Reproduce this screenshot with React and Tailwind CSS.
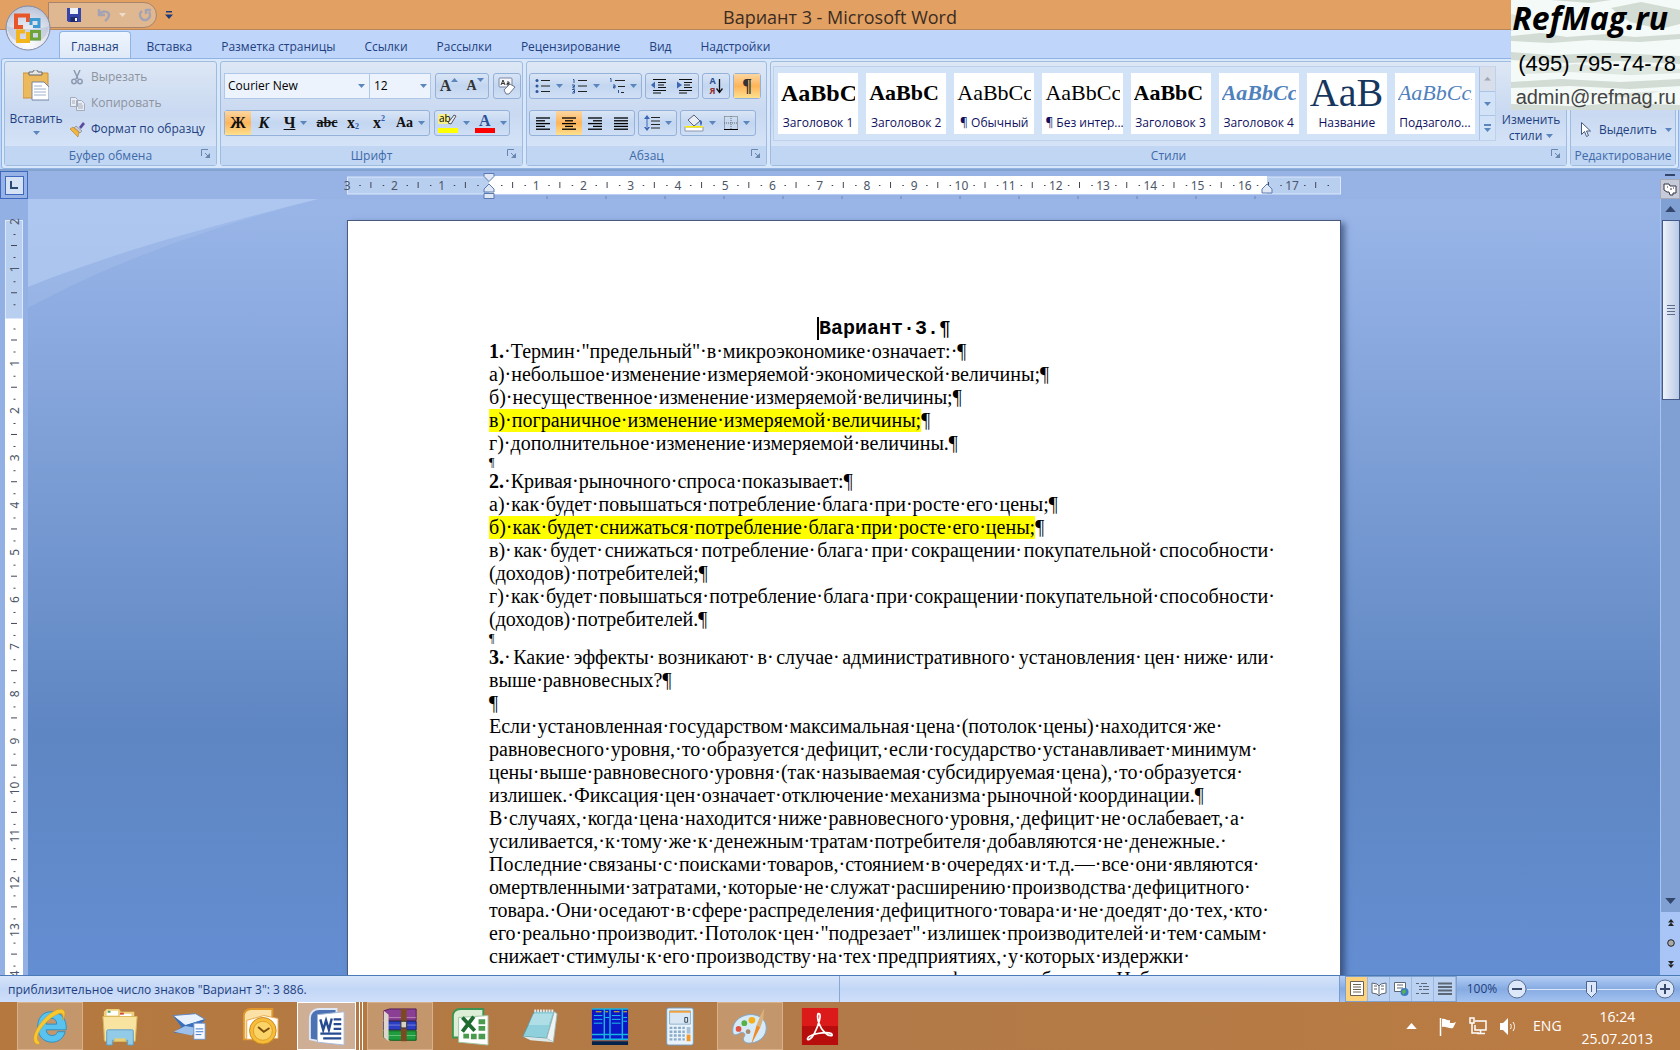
import React, { useState } from 'react';

const CM = 47.24;

const tabs = ['Главная', 'Вставка', 'Разметка страницы', 'Ссылки', 'Рассылки', 'Рецензирование', 'Вид', 'Надстройки'];

const styles = [
  { name: 'Заголовок 1', sample: 'AaBbCc', look: 'text-2xl/10 font-bold text-black' },
  { name: 'Заголовок 2', sample: 'AaBbC', look: 'text-[22px]/10 font-bold text-black' },
  { name: '¶ Обычный', sample: 'AaBbCc', look: 'text-[22px]/10 text-black' },
  { name: '¶ Без интер...', sample: 'AaBbCc', look: 'text-[22px]/10 text-black' },
  { name: 'Заголовок 3', sample: 'AaBbC', look: 'text-[22px]/10 font-bold text-black' },
  { name: 'Заголовок 4', sample: 'AaBbCc', look: 'text-[22px]/10 font-bold italic text-[#4f81bd]' },
  { name: 'Название', sample: 'AaB', look: 'text-[40px]/10 text-[#17365d]' },
  { name: 'Подзаголо...', sample: 'AaBbCcD', look: 'text-[22px]/10 italic text-[#4f81bd]' },
];

const lines = [
  { num: '1.', text: 'Термин "предельный" в микроэкономике означает: ¶' },
  { text: 'а) небольшое изменение измеряемой экономической величины;¶' },
  { text: 'б) несущественное изменение измеряемой величины;¶' },
  { mark: true, text: 'в) пограничное изменение измеряемой величины;' },
  { text: 'г) дополнительное изменение измеряемой величины.¶' },
  { small: true, text: '¶' },
  { num: '2.', text: 'Кривая рыночного спроса показывает:¶' },
  { text: 'а) как будет повышаться потребление блага при росте его цены;¶' },
  { mark: true, text: 'б) как будет снижаться потребление блага при росте его цены;' },
  { full: true, text: 'в) как будет снижаться потребление блага при сокращении покупательной способности' },
  { text: '(доходов) потребителей;¶' },
  { full: true, text: 'г) как будет повышаться потребление блага при сокращении покупательной способности' },
  { text: '(доходов) потребителей.¶' },
  { small: true, text: '¶' },
  { full: true, num: '3.', text: 'Какие эффекты возникают в случае административного установления цен ниже или' },
  { text: 'выше равновесных?¶' },
  { text: '¶' },
  { text: 'Если установленная государством максимальная цена (потолок цены) находится же ' },
  { text: 'равновесного уровня, то образуется дефицит, если государство устанавливает минимум ' },
  { text: 'цены выше равновесного уровня (так называемая субсидируемая цена), то образуется ' },
  { text: 'излишек. Фиксация цен означает отключение механизма рыночной координации.¶' },
  { text: 'В случаях, когда цена находится ниже равновесного уровня, дефицит не ослабевает, а ' },
  { text: 'усиливается, к тому же к денежным тратам потребителя добавляются не денежные. ' },
  { text: 'Последние связаны с поисками товаров, стоянием в очередях и т.д.— все они являются ' },
  { text: 'омертвленными затратами, которые не служат расширению производства дефицитного ' },
  { text: 'товара. Они оседают в сфере распределения дефицитного товара и не доедят до тех, кто ' },
  { text: 'его реально производит. Потолок цен "подрезает" излишек производителей и тем самым ' },
  { text: 'снижает стимулы к его производству на тех предприятиях, у которых издержки ' },
  { text: 'производства оказались выше уровня потолка цены, фирмы не больше. Наблюдается ' },
];

const dots = (s) => s.replace(/ /g, '·');

const Arrow = ({ big, className = 'text-[#5b86bd]' }) => (
  <svg width={big ? 11 : 7} height={big ? 6 : 4} viewBox="0 0 7 4" className={`shrink-0 ${className}`} aria-hidden="true">
    <path d="M0 0h7L3.5 4z" fill="currentColor" />
  </svg>
);

const Line = ({ line }) => {
  if (line.full) {
    const words = line.text.split(' ');
    return (
      <p className="-mr-2 flex h-[23px] justify-between whitespace-nowrap">
        {line.num && <span><b>{line.num}</b>·</span>}
        {words.map((w, i) => <span key={i}>{w}·</span>)}
      </p>
    );
  }
  if (line.small) return <p className="h-[15px] text-xs leading-[15px]">{line.text}</p>;
  if (line.mark) {
    return (
      <p className="h-[23px] whitespace-nowrap">
        <mark className="inline-block h-[23px] bg-[#ffff00] text-black">{dots(line.text)}</mark>¶
      </p>
    );
  }
  return (
    <p className="h-[23px] whitespace-nowrap">
      {line.num && <b>{line.num}</b>}
      {line.num && '·'}
      {dots(line.text)}
    </p>
  );
};

const Group = ({ title, launcher = true, className = '', children }) => (
  <section className={`flex flex-col rounded-[3px] border border-[#9dbcdf] bg-gradient-to-b from-[#dde7f5] via-[#c9d9f1] to-[#dbe9fa] ${className}`}>
    <div className="flex h-[84px] min-w-0">{children}</div>
    <div className="relative flex h-[19px] items-center justify-center bg-[#c1d6f2] pt-px text-[#3e6aaa]">
      <h2>{title}</h2>
      {launcher && (
        <button aria-label={`Параметры: ${title}`} className="absolute top-[3px] right-[5px]">
          <svg width="10" height="10" viewBox="0 0 10 10" fill="none" stroke="#6886ae">
            <path d="M.5 7V.5H7M4 4l4 4" />
            <path d="M9 4v5H4z" fill="#6886ae" stroke="none" />
          </svg>
        </button>
      )}
    </div>
  </section>
);

const Set = ({ children }) => (
  <div className="flex h-[26px] rounded-[3px] border border-[#94b1da] bg-gradient-to-b from-[#d9e5f6] via-[#c3d6f0] to-[#cfdff5]">{children}</div>
);

const Tool = ({ label, wide, active, arrow, children }) => (
  <button
    aria-label={label}
    className={`flex items-center justify-center leading-none ${wide ? 'w-[37px] gap-[5px]' : 'w-[26px]'} ${active ? 'bg-gradient-to-b from-[#fbd6a0] via-[#fdb458] to-[#fde08f]' : ''}`}
  >
    {children}
    {arrow && <Arrow />}
  </button>
);

const Rows = ({ rows }) => (
  <svg width="14" height="13" viewBox="0 0 14 13" stroke="#000" strokeWidth="1.3" aria-hidden="true">
    {rows.map(([a, b], i) => <path key={i} d={`M${a} ${i * 2.8 + 1}H${b}`} />)}
  </svg>
);

const Bullets = ({ kind }) => (
  <svg width="16" height="16" viewBox="0 0 16 16" stroke="#222" aria-hidden="true">
    {kind === 'tree' ? <path d="M6 2.5h10M9 8.5h7M12 14.5h3" /> : <path d="M6 2.5h9M6 8h9M6 13.5h9" />}
    {kind === 'dot' && <g fill="#2b579a" stroke="none"><circle cx="2" cy="2.5" r="1.5" /><circle cx="2" cy="8" r="1.5" /><circle cx="2" cy="13.5" r="1.5" /></g>}
    {kind === 'num' && <g stroke="#2b579a" fill="none"><path d="M1 1.5h1V5M0 7h2.5v1.5H1V10h2M0 11.5h2.5V15H0M1 13.5h1" /></g>}
    {kind === 'tree' && <g stroke="#2b579a" fill="none"><path d="M1 .5h1V4M4 7h2v3H4.5V8.5H6M9.5 12v3" /></g>}
  </svg>
);

const Indent = ({ out }) => (
  <svg width="16" height="16" viewBox="0 0 16 16" stroke="#111" fill="none" aria-hidden="true">
    <path d="M2 1.5h13M7 4.5h8M7 7h6M7 9.5h8M2 12.5h13M2 15h8" strokeWidth="1.2" />
    <path d={out ? 'M4 3.5L0 7l4 3.5z' : 'M0 3.5L5 7l-5 3.5z'} fill="#3a66b5" stroke="none" />
  </svg>
);

function HRuler() {
  const items = [];
  for (let i = -3; i <= 17; i++) {
    const x = 142 + i * CM;
    if (i !== 0) items.push(<text key={i} x={x} y="14" textAnchor="middle">{Math.abs(i)}</text>);
    items.push(<path key={`d${i}`} d={`M${x + 12} 9.5h1.5M${x + CM * 0.75} 9.5h1.5`} stroke="#445" />);
    items.push(<path key={`h${i}`} d={`M${x + CM / 2} 6v6`} stroke="#445" />);
  }
  return (
    <svg width="994" height="28" viewBox="0 -5 994 28" className="mx-auto block overflow-visible font-['Noto_Sans',sans-serif] text-xs" fill="#4c5668">
      <rect x=".5" y="1" width="993" height="17" fill="#b9cff0" stroke="#dbe8fb" />
      <rect x="142" y="0" width="778" height="18" fill="#fff" />
      {items}
      <path d="M200 20v3M259 20v3M318 20v3M377 20v3M436 20v3M495 20v3M554 20v3M613 20v3M672 20v3M731 20v3M790 20v3M849 20v3M908 20v3" stroke="#6d84b0" />
      <g fill="#dfe8f4" stroke="#5a7ab0">
        <path d="M137 -2.5h10v3l-5 5-5-5zM142 8l5 5v3h-10v-3zM137 17.5h10v5h-10zM920 8l5 5v4h-10v-4z" />
      </g>
    </svg>
  );
}

function VRuler() {
  const items = [];
  for (let i = -2; i <= 16; i++) {
    const y = 98 + i * CM;
    if (i !== 0) items.push(<text key={i} transform={`translate(14 ${y - 2}) rotate(-90)`} textAnchor="middle">{Math.abs(i)}</text>);
    items.push(<path key={`d${i}`} d={`M8.5 ${y + 11}h2M8.5 ${y + 34}h2M6 ${y + 22}h6`} stroke="#445" />);
  }
  return (
    <svg width="18" height="900" className="block overflow-visible font-['Noto_Sans',sans-serif] text-xs" fill="#4c5668">
      <rect width="18" height="900" fill="#fff" />
      <rect x=".5" y=".5" width="17" height="98" fill="#b9cff0" stroke="#dbe8fb" />
      {items}
    </svg>
  );
}

const OfficeLogo = () => (
  <svg width="46" height="46" viewBox="0 0 46 46" aria-hidden="true">
    <defs>
      <radialGradient id="orb" cx=".5" cy=".85" r=".9"><stop offset="0" stopColor="#fff" /><stop offset=".55" stopColor="#dde1ec" /><stop offset="1" stopColor="#b4bfd4" /></radialGradient>
    </defs>
    <circle cx="23" cy="23" r="22" fill="url(#orb)" stroke="#7f8ba6" />
    <path d="M2 21c8 4 34 4 42 0A21 21 0 0 1 35 36H11A21 21 0 0 1 2 21z" fill="#aab6d2" opacity=".45" />
    <g fill="none" strokeWidth="4">
      <path d="M18 22h-7V10.5H23V17" stroke="#e8572a" />
      <path d="M26 20v-5.5h8v7h-6" stroke="#3e9ad2" strokeWidth="3" />
      <path d="M20 26.5h-7v9.5h10v-9" stroke="#f2b51d" />
      <path d="M26.5 26.5h8v7.5h-8z" stroke="#6ba53a" strokeWidth="3" />
    </g>
  </svg>
);

const taskApps = [
  {
    name: 'Internet Explorer', open: true, icon: (
      <>
        <path d="M21 5C12 5 7 12 7 21s6 16 15 16c7 0 12-4 14-11h-8c-1 3-3 4-6 4-4 0-6-3-6-6h21C38 12 31 5 21 5zm-5 13c1-5 3-6 6-6s5 2 5 6z" fill="#58c3ee" stroke="#2a8fc6" />
        <path d="M6 39C-4 34 12 9 27 3c9-3 11 4 6 11 2-7 0-9-6-6C16 13 2 31 8 36c2 2 1 4-2 3z" fill="#f8c82e" stroke="#d79a12" strokeWidth=".5" />
      </>
    ),
  },
  {
    name: 'Проводник', icon: (
      <>
        <path d="M3 5l3-3h13l2 3h14v30H3z" fill="#eed07a" />
        <path d="M6 4h12v5H6zM20 7h12v4H20z" fill="#fff" /><path d="M7 4h3v2H7z" fill="#4aa35a" /><path d="M20 6h4v2h-4z" fill="#d4483b" />
        <path d="M2 10h36l-2 26H4z" fill="#f9e3a0" stroke="#d9b75c" />
        <path d="M6 26c0-2 1-2 2-2h24c2 0 2 0 2 2v14h-6v-5H12v5H6z" fill="#92cbe8" stroke="#5c9fc8" /><path d="M14 33h12v3H14z" fill="#e9cf72" />
      </>
    ),
  },
  {
    name: 'Почта', icon: (
      <>
        <path d="M2 9l24-2 10 6-21 7z" fill="#e9f2fc" stroke="#5b87c4" /><path d="M2 9l13 10 21-6-14 16-19-2 8-6z" fill="#3a6fbc" />
        <path d="M3 26l12-6 13 2-6 8z" fill="#9dc0ea" /><path d="M24 17h12v17H24z" fill="#f6f9ff" stroke="#6a8fc5" /><path d="M26 23h8M26 26h8M26 29h6" stroke="#3a78c9" />
      </>
    ),
  },
  {
    name: 'Outlook', icon: (
      <>
        <path d="M3 34V10c0-5 3-8 8-8h22v32z" fill="#fbe1a5" stroke="#e0972b" strokeWidth="2" />
        <path d="M6 14l18-5 15 3v21l-33 1z" fill="#fff" stroke="#e6a649" />
        <circle cx="23" cy="25" r="14" fill="#f6bc3a" stroke="#c9871a" /><circle cx="23" cy="25" r="10" fill="#fbd469" stroke="#e09c22" /><path d="M18 21l6 5 6-4" fill="none" stroke="#7b4d0b" strokeWidth="2" />
      </>
    ),
  },
  {
    name: 'Word', current: true, icon: (
      <>
        <path d="M2 34V12C2 6 6 2 12 2h18v6L12 36z" fill="#4d72b4" stroke="#dfe8f6" strokeWidth="2" />
        <path d="M10 8l28-3v35l-28-3z" fill="#fff" stroke="#a6b9d9" />
        <path d="M13 13l3 11 3-10 3 10 3-12" fill="none" stroke="#274b91" strokeWidth="2.5" /><path d="M27 13h8M27 18h8M27 23h8M13 28h22M16 33h19" stroke="#274b91" strokeWidth="2.5" />
      </>
    ),
  },
  {
    name: 'WinRAR', open: true, icon: (
      <>
        <path d="M3 4l6-2h28v12H3z" fill="#8a3f94" stroke="#4f1d58" /><path d="M3 15h34v9H3z" fill="#2c3fc4" stroke="#131d70" /><path d="M3 25h34v10H10l-7-3z" fill="#1f9c3d" stroke="#0b5a1d" />
        <path d="M3 4l5 4v28l-5-4z" fill="#ded6cd" /><path d="M8 11h29M8 19h29M8 30h29" stroke="#fff" opacity=".35" />
        <path d="M21 2h6v34h-6z" fill="#7c4a22" /><path d="M21 15h6v7h-6z" fill="#d9d2c2" stroke="#333" />
      </>
    ),
  },
  {
    name: 'Excel', icon: (
      <>
        <path d="M2 32V10c0-5 3-8 8-8h24v30z" fill="#dcefd6" stroke="#3e9450" strokeWidth="2" /><path d="M8 11l31-2v31l-31-3z" fill="#fff" stroke="#9dc5a2" />
        <path d="M29 13h7v5h-7zM29 20h7v5h-7zM29 28h7v6h-7zM21 28h6v6h-6zM13 28h6v5h-6z" fill="#4a9b4e" /><path d="M12 11l13 14M24 10L12 26" stroke="#1f6b30" strokeWidth="4" />
      </>
    ),
  },
  {
    name: 'Блокнот', icon: (
      <>
        <path d="M14 5h21l-8 28-25-2z" fill="#8fd0dc" stroke="#5a9aa8" /><path d="M35 5l3 2-4 30-7-4z" fill="#eef4f4" stroke="#9fb6b8" /><path d="M2 31l25 2 7 4-24-2z" fill="#dce8e8" />
        <path d="M14 4h21" stroke="#e8e8e8" strokeWidth="3" strokeDasharray="2 1" /><path d="M13 7h20l-4 12H8z" fill="#c4e8ee" opacity=".6" />
      </>
    ),
  },
  {
    name: 'База данных', icon: (
      <>
        <path d="M1 2h38v33H1z" fill="#0a16c8" /><path d="M1 2h38M1 34h38M14 2v32M20 2v32M33 2v32M1 29h38" stroke="#17b6dc" strokeWidth="1.5" />
        <path d="M3 9h9M3 13h9M3 17h9M22 9h9M22 13h9M22 17h9M15 11h4M34 11h4M34 15h4" stroke="#21c8e8" /><path d="M5 5h6M24 5h6M15 5h3M34 5h4" stroke="#f4d000" /><path d="M1 36h38v4H1z" fill="#05224a" />
      </>
    ),
  },
  {
    name: 'Калькулятор', icon: (
      <>
        <rect x="6" y="1" width="28" height="39" rx="2" fill="#eaf3fa" stroke="#6f9bc0" /><path d="M9 4h22v14H9z" fill="#d8e7f3" stroke="#8eb1cd" /><path d="M9 5h22" stroke="#f0a23c" strokeWidth="2" /><path d="M25 11h3v5h-3z" fill="none" stroke="#345" />
        <path d="M9 22h16M9 26h16M9 30h16M9 34h16" stroke="#8aaccb" strokeWidth="2.5" strokeDasharray="3 1.5" /><path d="M27 21h4v7h-4z" fill="#a8c3d9" /><path d="M27 29h4v7h-4z" fill="#f0992d" />
      </>
    ),
  },
  {
    name: 'Paint', open: true, icon: (
      <>
        <path d="M2 27C0 15 12 7 23 8c10 1 15 8 14 16-1 9-10 14-18 14-6 0-7-5-5-7 2-3-1-5-4-4-3 2-7 4-8 0z" fill="#d6eaf8" stroke="#7ba7cc" />
        <circle cx="8" cy="23" r="3" fill="#e25342" /><circle cx="14" cy="17" r="3" fill="#56b147" /><circle cx="22" cy="14" r="3.5" fill="#f5af1b" /><circle cx="18" cy="26" r="2.5" fill="#a88c70" />
        <path d="M21 40l6-21 4 2z" fill="#ee8a28" /><path d="M27 19l4-10 4-8-1 11-3 9z" fill="#d8b27a" />
      </>
    ),
  },
  {
    name: 'Adobe Reader', icon: (
      <>
        <path d="M1 1h38v39H1z" fill="#b80d0d" /><path d="M1 1h38v19H1z" fill="#dc1a1a" />
        <path d="M18 7c5-1 0 13-4 21-3 6-8 8-7 5 1-4 19-8 25-5 3 3-3 3-7-1-5-5-9-15-7-20z" fill="none" stroke="#fff" strokeWidth="1.8" />
      </>
    ),
  },
];

const views = [
  { name: 'Разметка страницы', icon: <><path d="M1.5.5h13v14h-13z" fill="#fff" stroke="#6b6250" /><path d="M4 3.5h8M4 6h8M4 8.5h8M4 11h8" stroke="#6b6250" /></> },
  { name: 'Режим чтения', icon: <path d="M1 2l5 1 2 2 2-2 5-1v10l-5 1-2 2-2-2-5-1zM8 5v9M3 5h3M3 8h3M10 5h3M10 8h3" fill="#fff" stroke="#5d6674" /> },
  { name: 'Веб-документ', icon: <><path d="M1.5 1.5h11v9h-11z" fill="#fff" stroke="#5d6674" /><path d="M4 4h6M4 7h6" stroke="#5d6674" /><circle cx="11.5" cy="11" r="4" fill="#3b7dc4" /><path d="M9 10l3-2 1 3-3 3z" fill="#5fb04a" /></> },
  { name: 'Структура', icon: <path d="M1 2.5h3M6 2.5h6M4 5.5h3M8 5.5h6M4 8.5h3M8 8.5h6M1 12.5h3M6 12.5h8" stroke="#5d6674" /> },
  { name: 'Черновик', icon: <path d="M1 2.5h14M1 6h14M1 9.5h14M1 13h14" stroke="#5d6674" strokeWidth="1.8" /> },
];

export default function App() {
  const [tab, setTab] = useState('Главная');
  const [font, setFont] = useState('Courier New');
  const [size, setSize] = useState('12');
  const [zoom, setZoom] = useState(100);

  return (
    <div className="relative flex h-screen flex-col overflow-hidden bg-[#bfd5fa] font-['Open_Sans','Noto_Sans',sans-serif] text-xs text-[#1e3f80]">
      <header className="relative">
        <div className="flex h-[30px] items-center justify-center border-b border-[#b9865a] bg-[#e2a062]">
          <h1 className="pt-1 text-lg text-[#3a2c22]">Вариант 3 - Microsoft Word</h1>
        </div>

        {/* quick access toolbar and the office button overlap the title bar */}
        <div className="absolute top-[2px] left-12 flex h-[26px] w-[109px] items-center gap-3 rounded-r-full border border-[#a9836a] bg-[#dfb791] pl-[18px]">
          <button aria-label="Сохранить">
            <svg width="14" height="14" viewBox="0 0 14 14"><path d="M0 0h14v14H1.5L0 12.5z" fill="#3545a8" /><path d="M3 0h8v6H3z" fill="#eef2fb" /><path d="M3.5 9h7v5h-7z" fill="#1e2970" /><path d="M8 10h2v3H8z" fill="#fff" /></svg>
          </button>
          <button aria-label="Отменить" className="ml-1 flex items-center gap-2">
            <svg width="14" height="14" viewBox="0 0 14 14" fill="none" stroke="#a3a3b4" strokeWidth="2.5"><path d="M2 1v6h6M2 7c3-5 10-4 10 0 0 3-2 4-4 6" /></svg>
            <Arrow className="text-[#f0dccb]" />
          </button>
          <button aria-label="Повторить">
            <svg width="14" height="14" viewBox="0 0 14 14" fill="none" stroke="#a3a3b4" strokeWidth="2.5"><path d="M4 3a5 5 0 1 0 7 1M8 6V1M8 2h5" /></svg>
          </button>
        </div>
        <button aria-label="Настройка панели быстрого доступа" className="absolute top-[11px] left-[165px]">
          <svg width="8" height="8" viewBox="0 0 8 8" fill="#1f3a78"><path d="M1 0h6v1.5H1zM0 3.5h8L4 8z" /></svg>
        </button>
        <button aria-label="Кнопка Office" className="absolute top-[5px] left-[5px] z-10"><OfficeLogo /></button>

        <nav className="flex h-7 items-end pl-[59px]">
          {tabs.map((t) => (
            <button
              key={t}
              onClick={() => setTab(t)}
              className={`h-[27px] rounded-t-[4px] pt-1 ${t === tab ? 'mr-1 border border-b-0 border-[#8fb4e3] bg-gradient-to-b from-[#eef5fd] to-[#dfe9f7] px-[11px]' : 'mr-[5px] px-3'}`}
            >
              {t}
            </button>
          ))}
        </nav>

        <div className="mx-px flex gap-[3px] rounded-[3px] border border-[#8fb4e3] bg-[#d8e7fa] p-[2px]">
          <Group title="Буфер обмена" className="w-[213px]">
            <button className="flex w-[62px] shrink-0 flex-col items-center pt-2">
              <svg width="26" height="31" viewBox="0 0 26 31" aria-hidden="true">
                <path d="M0 3h25v25H0z" fill="#ecb95c" stroke="#c8923a" /><path d="M6 5V2h4c0-3 5-3 5 0h4v3z" fill="#e6e6e6" stroke="#666" />
                <path d="M9 12h12l5 5v13H9z" fill="#fff" stroke="#7286a8" /><path d="M11 16h8M11 19h12M11 22h12M11 25h12" stroke="#9fb0cc" />
              </svg>
              <span className="mt-[10px]">Вставить</span>
              <span className="mt-1"><Arrow /></span>
            </button>
            <div className="flex flex-col gap-[10px] pt-[7px] pl-[3px]">
              <button disabled className="flex items-center gap-[6px] text-[#8d939d]">
                <svg width="15" height="15" viewBox="0 0 15 15" fill="none" stroke="#8d99b0" strokeWidth="1.5"><path d="M4 0l4 9M10 0L6 9" /><circle cx="4" cy="11.5" r="2.2" /><circle cx="10" cy="11.5" r="2.2" /></svg>
                Вырезать
              </button>
              <button disabled className="flex items-center gap-[6px] text-[#8d939d]">
                <svg width="15" height="15" viewBox="0 0 15 15" fill="#e8edf5" stroke="#a3abbb"><path d="M.5 1.5h5l2 2v7h-7zM6.5 4.5h5l3 3v7h-8z" /><path d="M2 5h3M2 7h3M8 8h4M8 10h5M8 12h5" /></svg>
                Копировать
              </button>
              <button className="flex items-center gap-[6px]">
                <svg width="15" height="15" viewBox="0 0 15 15"><path d="M9 5l4-5 2 2-4 5z" fill="#5a4aa0" /><path d="M6 4l6 5-2 2-6-5z" fill="#c8ccd8" stroke="#666" strokeWidth=".5" /><path d="M3 5l6 5-1 5-8-8z" fill="#f0b640" stroke="#a06c18" strokeWidth=".5" /></svg>
                Формат по образцу
              </button>
            </div>
          </Group>

          <Group title="Шрифт" className="w-[303px]">
            <div className="flex flex-col gap-[11px] px-[3px] pt-[11px]">
              <div className="flex gap-1">
                <div className="flex">
                  <label className="relative flex items-center">
                    <span className="sr-only">Шрифт</span>
                    <select value={font} onChange={(e) => setFont(e.target.value)} className="h-[26px] w-[146px] appearance-none border border-[#b0c8e8] bg-[#ecf3fc] pl-[3px] leading-5 text-black">
                      <option>Courier New</option>
                      <option>Times New Roman</option>
                    </select>
                    <span className="pointer-events-none absolute right-[5px]"><Arrow /></span>
                  </label>
                  <label className="relative flex items-center">
                    <span className="sr-only">Размер шрифта</span>
                    <select value={size} onChange={(e) => setSize(e.target.value)} className="h-[26px] w-[61px] appearance-none border border-l-0 border-[#b0c8e8] bg-[#ecf3fc] pl-1 leading-5 text-black">
                      <option>12</option>
                      <option>14</option>
                    </select>
                    <span className="pointer-events-none absolute right-[4px]"><Arrow /></span>
                  </label>
                </div>
                <Set>
                  <Tool label="Увеличить размер"><span className="font-['Liberation_Serif',serif] text-base leading-5 font-bold text-[#333]">A</span><span className="mb-3 rotate-180"><Arrow /></span></Tool>
                  <Tool label="Уменьшить размер"><span className="font-['Liberation_Serif',serif] text-sm leading-5 font-bold text-[#333]">A</span><span className="mb-3"><Arrow /></span></Tool>
                </Set>
                <Set>
                  <Tool label="Очистить формат">
                    <svg width="18" height="18" viewBox="0 0 18 18"><rect x="1" y="1" width="13" height="9" rx="1" fill="#f4f6fa" stroke="#7a88a5" /><path d="M3 8l2-5 2 5M4 6.5h2M9 5h2v3H9V6.5h2" fill="none" stroke="#333" /><path d="M6 13l6-6 5 3-6 7H8z" fill="#fff" stroke="#6a7790" /></svg>
                  </Tool>
                </Set>
              </div>
              <div className="flex gap-1 font-['Liberation_Serif',serif] text-base font-bold text-[#111]">
                <Set>
                  <Tool label="Полужирный" active>Ж</Tool>
                  <Tool label="Курсив"><i>К</i></Tool>
                  <Tool label="Подчеркнутый" wide arrow><span className="underline">Ч</span></Tool>
                  <Tool label="Зачеркнутый"><s className="text-sm">abc</s></Tool>
                  <Tool label="Подстрочный"><span>x</span><span className="mt-2 text-[8px] leading-3 text-[#2b5cb0]">2</span></Tool>
                  <Tool label="Надстрочный"><span>x</span><span className="mb-2 text-[8px] leading-3 text-[#2b5cb0]">2</span></Tool>
                  <Tool label="Регистр" wide arrow><span className="text-sm">Aa</span></Tool>
                </Set>
                <Set>
                  <Tool label="Цвет выделения" wide arrow>
                    <svg width="20" height="20" viewBox="0 0 20 20"><path d="M0 1h11v10H0z" fill="#f6f08a" /><text x="1" y="9" fontSize="10" fontFamily="Open Sans" fontWeight="400">ab</text><path d="M10 10l6-8 2 1-5 8z" fill="#e8eef7" stroke="#555" /><path d="M0 15h20v5H0z" fill="#ffff00" /></svg>
                  </Tool>
                  <Tool label="Цвет текста" wide arrow>
                    <svg width="20" height="20" viewBox="0 0 20 20"><text x="4" y="13" fontSize="16" fill="#2b4f94" fontFamily="Liberation Serif">A</text><path d="M0 15h20v5H0z" fill="#ff0000" /></svg>
                  </Tool>
                </Set>
              </div>
            </div>
          </Group>

          <Group title="Абзац" className="w-[241px]">
            <div className="flex flex-col gap-[11px] px-[2px] pt-[11px]">
              <div className="flex gap-[3px]">
                <Set>
                  <Tool label="Маркеры" wide arrow><Bullets kind="dot" /></Tool>
                  <Tool label="Нумерация" wide arrow><Bullets kind="num" /></Tool>
                  <Tool label="Многоуровневый список" wide arrow><Bullets kind="tree" /></Tool>
                </Set>
                <Set>
                  <Tool label="Уменьшить отступ"><Indent out /></Tool>
                  <Tool label="Увеличить отступ"><Indent /></Tool>
                </Set>
                <Set>
                  <Tool label="Сортировка">
                    <span className="flex flex-col text-[9px] leading-[10px] font-bold"><span className="text-[#2b4f94]">А</span><span className="text-[#943030]">Я</span></span>
                    <svg width="7" height="16" viewBox="0 0 7 16"><path d="M3.5 1v13M.5 10.5l3 4 3-4" stroke="#111" strokeWidth="1.3" fill="none" /></svg>
                  </Tool>
                </Set>
                <Set>
                  <Tool label="Отобразить все знаки" active><span className="font-['Liberation_Serif',serif] text-lg font-bold text-[#333]">¶</span></Tool>
                </Set>
              </div>
              <div className="flex gap-[3px]">
                <Set>
                  <Tool label="По левому краю"><Rows rows={[[0, 14], [0, 9], [0, 14], [0, 9], [0, 14]]} /></Tool>
                  <Tool label="По центру" active><Rows rows={[[0, 14], [3, 11], [0, 14], [3, 11], [0, 14]]} /></Tool>
                  <Tool label="По правому краю"><Rows rows={[[0, 14], [5, 14], [0, 14], [5, 14], [0, 14]]} /></Tool>
                  <Tool label="По ширине"><Rows rows={[[0, 14], [0, 14], [0, 14], [0, 14], [0, 14]]} /></Tool>
                </Set>
                <Set>
                  <Tool label="Междустрочный интервал" wide arrow>
                    <svg width="16" height="18" viewBox="0 0 16 18"><path d="M7 3.5h9M7 7h9M7 10.5h9M7 14h9" stroke="#222" /><path d="M0 5l3-4 3 4zM0 13l3 4 3-4zM2.5 4h1v10h-1z" fill="#3a66b5" /></svg>
                  </Tool>
                </Set>
                <Set>
                  <Tool label="Заливка" wide arrow>
                    <svg width="20" height="18" viewBox="0 0 20 18"><path d="M4 6l6-5 6 6-6 5z" fill="#e9edf5" stroke="#56627a" /><path d="M16 6c3 1 2 4 1 6-1-1-1-3-1-6z" fill="#3a66b5" /><path d="M1 13h18v4H1z" fill="#fff" stroke="#8b98ae" /><path d="M1 12h18v1.5H1z" fill="#ffee00" /></svg>
                  </Tool>
                  <Tool label="Границы" wide arrow>
                    <svg width="14" height="14" viewBox="0 0 14 14" fill="none" stroke="#666"><path d="M.5.5h13v13M.5.5v13M7 0v13M0 7h14" strokeDasharray="1 1" /><path d="M0 13.5h14" stroke="#000" /></svg>
                  </Tool>
                </Set>
              </div>
            </div>
          </Group>

          <Group title="Стили" className="min-w-0 flex-1">
            <div className="mt-1 ml-[2px] flex h-[75px] min-w-0 flex-1 border border-[#bed0ea] bg-[#d2e2f7]">
              <div className="flex min-w-0 flex-1 gap-2 overflow-hidden px-1 py-[6px]">
                {styles.map((s) => (
                  <button key={s.name} className="flex min-w-0 flex-1 flex-col overflow-hidden bg-white px-[3px] whitespace-nowrap text-[#101060]">
                    <span className={`h-10 w-full overflow-hidden text-left font-['Liberation_Serif',serif] ${s.look}`}>{s.sample}</span>
                    <span className="w-full text-center leading-5">{s.name}</span>
                  </button>
                ))}
              </div>
              <div className="flex w-4 flex-col border-l border-[#aac3e6]">
                <button aria-label="Вверх" className="flex flex-1 rotate-180 items-center justify-center bg-[#d8dfea]"><Arrow className="text-[#a0a8b8]" /></button>
                <button aria-label="Вниз" className="flex flex-1 items-center justify-center border-y border-[#aac3e6]"><Arrow /></button>
                <button aria-label="Дополнительные стили" className="flex flex-1 flex-col items-center justify-center gap-[2px]"><span className="h-[2px] w-[7px] bg-[#5b86bd]" /><Arrow /></button>
              </div>
            </div>
            <button className="flex w-[70px] flex-col items-center justify-end pb-[2px] leading-4">
              <span>Изменить</span>
              <span className="flex items-center gap-1">стили <Arrow /></span>
            </button>
          </Group>

          <Group title="Редактирование" launcher={false} className="w-[106px]">
            <button className="flex items-center gap-2 self-end pb-2 pl-[10px]">
              <svg width="10" height="16" viewBox="0 0 10 16"><path d="M.5.5v12l3-3 2 5 2-1-2-4.5h4z" fill="#fff" stroke="#445a80" /></svg>
              Выделить <Arrow />
            </button>
          </Group>
        </div>
      </header>

      <div className="flex min-h-0 flex-1 flex-col bg-gradient-to-b from-[#99b5e8] from-5% via-[#5e86c2] via-70% to-[#648ed2]">
        <div className="flex h-[30px] shrink-0 items-end border-t-2 border-[#84a3cf] bg-[#97b3e6]">
          <button aria-label="Позиция табуляции" className="flex size-[28px] items-center justify-center border border-[#3f68c0]">
            <span className="flex size-[19px] items-center justify-center border border-[#3f68c0] bg-[#d5e2f5]"><span className="size-2 border-b-2 border-l-2 border-[#2a4a70]" /></span>
          </button>
          <div className="min-w-0 flex-1"><HRuler /></div>
          <div className="flex w-5 flex-col items-center gap-[3px]">
            <span className="h-[2px] w-[10px] bg-[#34456a]" />
            <button aria-label="Линейка" className="flex size-[20px] items-center justify-center border border-[#a8a8b8] bg-[#c5cbd9]">
              <svg width="14" height="14" viewBox="0 0 14 14" fill="#fff" stroke="#334"><path d="M1 2h5l1 2h6v7h-3v2H7l-1-3H4L1 8z" /><path d="M4 5h1M7 7h2M10 6h1" /></svg>
            </button>
          </div>
        </div>

        <main className="flex min-h-0 flex-1">
          <div className="w-7 shrink-0 overflow-hidden bg-[#93b0e5] pt-[21px] pl-[5px]"><VRuler /></div>
          <div className="relative min-w-0 flex-1 overflow-hidden">
            <svg width="290" height="112" viewBox="0 0 290 112" className="absolute top-0 left-0" aria-hidden="true">
              <path d="M0 0h290C190 26 90 60 0 109z" fill="#b3ccf2" opacity=".25" />
              <path d="M0 0h290C180 28 90 52 0 88z" fill="#bcd3f5" opacity=".5" />
            </svg>
            <article className="relative mx-auto mt-[21px] min-h-full w-[994px] border border-[#4a5a7c] bg-white pt-24 pr-[73px] pl-[141px] font-['Liberation_Serif',serif] text-xl leading-[23px] text-black shadow-[4px_3px_6px_rgba(30,50,90,0.6)]">
              <h2 className="flex h-[23px] justify-center font-['Liberation_Mono',monospace] font-bold">
                <span className="border-l-2 border-black">Вариант·3.</span>
                <span className="w-0 font-normal">¶</span>
              </h2>
              {lines.map((line, i) => <Line key={i} line={line} />)}
            </article>
          </div>
          <div className="flex w-5 shrink-0 flex-col items-center border-l border-[#a9c4f0] bg-[#809fd2]">
            <button aria-label="Прокрутить вверх" className="flex h-[21px] shrink-0 rotate-180 items-center"><Arrow big className="text-[#33466b]" /></button>
            <div className="flex h-[180px] w-[18px] shrink-0 flex-col items-center justify-center gap-[2px] border border-[#44598a] bg-gradient-to-r from-[#eef2fb] to-[#b9c9e4]">
              <span className="h-px w-2 bg-[#5d6c8a]" /><span className="h-px w-2 bg-[#5d6c8a]" /><span className="h-px w-2 bg-[#5d6c8a]" /><span className="h-px w-2 bg-[#5d6c8a]" />
            </div>
            <div className="flex-1" />
            <button aria-label="Прокрутить вниз" className="flex h-[22px] items-center"><Arrow big className="text-[#33466b]" /></button>
            <div className="flex h-[63px] w-full flex-col items-center justify-around bg-[#a9c5f7]">
              <button aria-label="Предыдущая страница"><svg width="6" height="7" viewBox="0 0 7 8"><path d="M3.5 0L7 4H0zM3.5 4L7 8H0z" fill="#222" /></svg></button>
              <button aria-label="Объект перехода"><svg width="8" height="8" viewBox="0 0 8 8"><circle cx="4" cy="4" r="3.3" fill="#aaa" stroke="#222" /></svg></button>
              <button aria-label="Следующая страница"><svg width="6" height="7" viewBox="0 0 7 8"><path d="M0 0h7L3.5 4zM0 4h7L3.5 8z" fill="#222" /></svg></button>
            </div>
          </div>
        </main>
      </div>

      <footer>
        <div className="flex h-[27px] border-t border-[#4b7ab8] bg-gradient-to-b from-[#d6e4fa] via-[#c2d6f6] to-[#cfdffa]">
          <p className="flex flex-1 items-center pt-px pl-2">приблизительное число знаков "Вариант 3": 3 886.</p>
          <div className="w-[500px] border-l border-[#8aa8d4]" />
          <div className="flex w-[341px] items-center border-l border-[#7a9ccc] bg-gradient-to-b from-[#b3cdf4] via-[#86abe2] to-[#a3c2f0] pl-[5px]">
            <div className="flex h-[26px] border border-[#7f9fcc] bg-[#bcd2f2]">
              {views.map((v, i) => (
                <button key={v.name} aria-label={v.name} className={`flex w-[22px] items-center justify-center border-r border-[#9db8de] ${i === 0 ? 'bg-[#fdd27c]' : ''}`}>
                  <svg width="16" height="16" viewBox="0 0 16 16" fill="none">{v.icon}</svg>
                </button>
              ))}
            </div>
            <output className="w-[50px] text-center" htmlFor="zoom">{zoom}%</output>
            <button aria-label="Уменьшить" onClick={() => setZoom(Math.max(10, zoom - 10))}>
              <svg width="20" height="20" viewBox="0 0 20 20" fill="#dce8f9" stroke="#5a6d90"><circle cx="10" cy="10" r="9" /><path d="M5 10h10" strokeWidth="2" stroke="#39496b" /></svg>
            </button>
            <div className="relative flex h-5 flex-1 items-center justify-center">
              <span className="absolute inset-x-0 h-px bg-[#dce8f9]" />
              <input id="zoom" type="range" min="10" max="190" value={zoom} onChange={(e) => setZoom(Number(e.target.value))} aria-label="Масштаб" className="absolute inset-0 w-full opacity-0" />
              <svg width="11" height="17" viewBox="0 0 11 17" className="pointer-events-none relative"><path d="M.5.5h10v11l-5 5-5-5z" fill="#dce8f9" stroke="#4a648f" /><path d="M5.5 4v7" stroke="#4a648f" /></svg>
            </div>
            <button aria-label="Увеличить" className="mr-[5px]" onClick={() => setZoom(Math.min(190, zoom + 10))}>
              <svg width="20" height="20" viewBox="0 0 20 20" fill="#dce8f9" stroke="#5a6d90"><circle cx="10" cy="10" r="9" /><path d="M5 10h10M10 5v10" strokeWidth="2" stroke="#39496b" /></svg>
            </button>
          </div>
        </div>

        <div className="flex h-12 items-stretch bg-gradient-to-r from-[#b5793f] via-[#b17a48] to-[#bb7c42] pl-[17px]">
          <div className="flex flex-1 gap-1">
            {taskApps.map((a) => (
              <button
                key={a.name}
                aria-label={a.name}
                className={`relative flex items-center justify-center border ${a.current ? 'mr-[7px] w-[59px] border-white bg-[#cfae96] shadow-[3px_0_0_#b17a48,4px_0_0_#fff,6px_0_0_#b17a48,7px_0_0_#fff]' : a.open ? 'w-[66px] border-[#d9b08a] bg-[#c4966c]' : 'w-[66px] border-transparent'}`}
              >
                <svg width="38" height="39" viewBox="0 0 40 41">{a.icon}</svg>
              </button>
            ))}
          </div>
          <div className="flex items-center text-sm text-white">
            <button aria-label="Скрытые значки" className="mr-[22px] rotate-180"><Arrow big className="text-white" /></button>
            <svg width="18" height="19" viewBox="0 0 18 19" className="mr-3" aria-hidden="true"><path d="M1.5 1v18" stroke="#fff" strokeWidth="1.5" /><path d="M3 2c4-1 4 2 8 1v3c3 0 4 0 6-1l-3 6c-4 1-7-2-11-1z" fill="#fff" /></svg>
            <svg width="18" height="18" viewBox="0 0 18 18" className="mr-3" fill="none" stroke="#fff" strokeWidth="1.5" aria-hidden="true"><path d="M6 4h11v9H6V8M1 1h4v5H1zM3 6v10h7M8 16.5h8M11.5 13v3" /></svg>
            <svg width="18" height="19" viewBox="0 0 18 19" className="mr-4" aria-hidden="true"><path d="M1 6h3l5-5v17l-5-5H1z" fill="#fff" /><path d="M11.5 7c1 2 1 3 0 5M14 5c2 3 2 6 0 9" stroke="#fff" fill="none" /></svg>
            <span className="mr-5">ENG</span>
            <time className="mr-[27px] pt-[3px] text-center leading-[22px]">16:24<br />25.07.2013</time>
          </div>
        </div>
      </footer>

      <aside className="absolute top-0 right-0 z-20 flex h-[110px] w-[169px] flex-col items-end overflow-hidden bg-[#f4faf7] pr-1 font-['Liberation_Sans',sans-serif] whitespace-nowrap text-black">
        <svg viewBox="0 0 169 110" className="absolute inset-0 size-full" fill="#c9d3cb" aria-hidden="true">
          <path d="M0 36l30-3 26 4 40-3 28 3 45-3v5l-40 3-50-2-40 3-39-2zM0 52l40 3 60-2 69 3v8l-60-3-50 2-59-3zM0 82l50-3 60 3 59-3v7l-50 3-60-3-59 2zM100 8l30-6 39 8v14l-20 5-30-7zM40 0l40 3 20-3zM0 104l60 2 50-3 59 2v5H0z" opacity=".8" />
          <path d="M10 66l30 2 24-4 44 5 30-3 31 3v4l-50 2-60-3-49 2zM0 14l12 3-4 12-8 2zM60 92l40 2 50-3-30 7z" opacity=".5" />
        </svg>
        <strong className="relative mr-2 font-['Open_Sans',sans-serif] text-[32px] leading-9 font-bold italic">RefMag.ru</strong>
        <span className="relative mt-[14px] text-[22px] leading-7">(495) 795-74-78</span>
        <a href="mailto:admin@refmag.ru" className="relative mt-[5px] text-xl leading-7 text-[#444]">admin@refmag.ru</a>
      </aside>
    </div>
  );
}
